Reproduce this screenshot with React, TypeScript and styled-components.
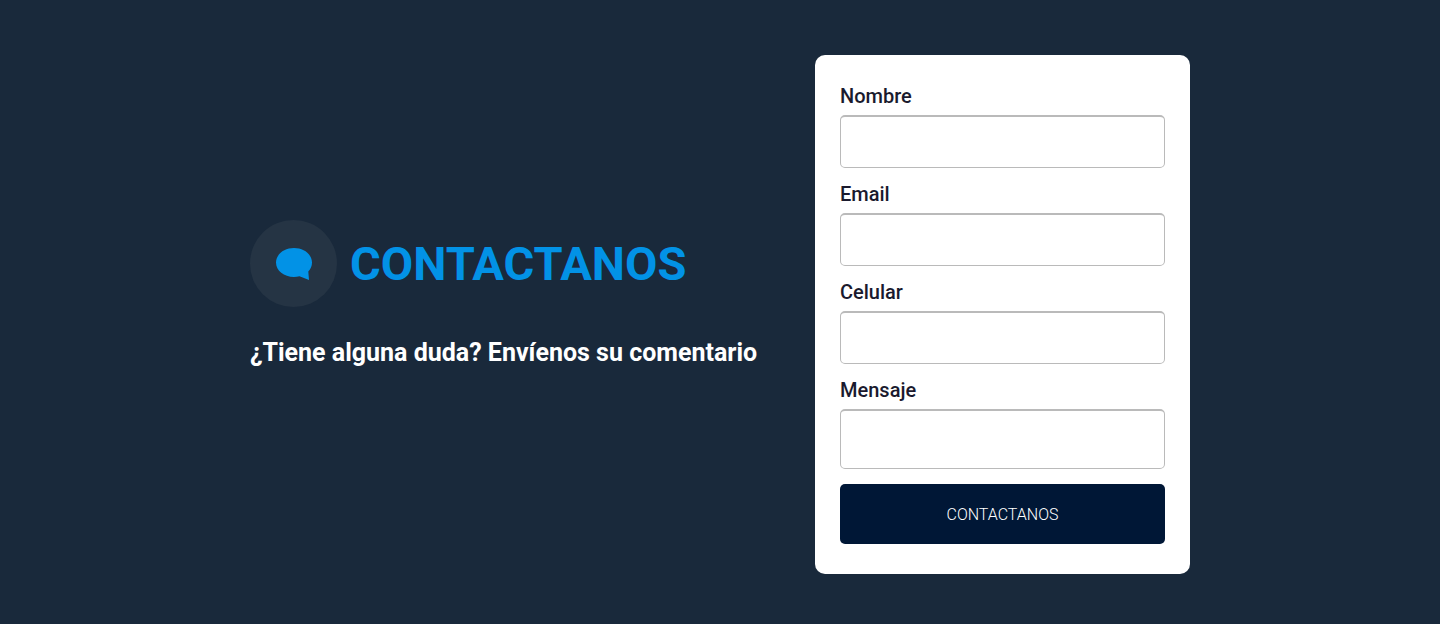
import React from "react";
import styled, { createGlobalStyle } from "styled-components";

const GlobalStyle = createGlobalStyle`
  *, *::before, *::after { box-sizing: border-box; }
  body {
    margin: 0;
    background: #ffffff;
    font-family: Roboto, "Liberation Sans", sans-serif;
  }
`;

const Section = styled.section`
  display: flex;
  justify-content: center;
  padding: 55px 20px 50px;
  background: #19293b;
`;

const Container = styled.div`
  display: flex;
  flex-wrap: wrap;
  align-items: center;
  justify-content: space-between;
  gap: 30px;
  width: 100%;
  max-width: 940px;
`;

const Intro = styled.div`
  padding-bottom: 40px;
`;

const Heading = styled.div`
  display: flex;
  align-items: center;
  gap: 13px;
`;

const IconCircle = styled.span`
  display: flex;
  align-items: center;
  justify-content: center;
  flex: none;
  width: 87px;
  height: 87px;
  border-radius: 50%;
  background: #253444;
`;

const Title = styled.h2`
  margin: 0;
  color: #0292e6;
  font-size: 47px;
  line-height: 60px;
  font-weight: 700;
`;

const Subtitle = styled.p`
  margin: 30px 0 0;
  color: #ffffff;
  font-size: 25px;
  line-height: 32px;
  font-weight: 700;
`;

const Form = styled.form`
  display: flex;
  flex-direction: column;
  gap: 15px;
  width: 375px;
  max-width: 100%;
  padding: 30px 25px;
  border-radius: 10px;
  background: #ffffff;
`;

const Field = styled.div`
  display: flex;
  flex-direction: column;
  gap: 7px;
`;

const Label = styled.label`
  color: #1a1a2e;
  font-size: 20px;
  line-height: 23px;
  font-weight: 500;
`;

const Input = styled.input`
  width: 100%;
  height: 53px;
  padding: 0 12px;
  border: 1px solid #bababa;
  border-top-width: 2px;
  border-radius: 5px;
  background: #ffffff;
  font: inherit;
`;

const TextArea = styled.textarea`
  display: block;
  width: 100%;
  height: 60px;
  padding: 12px;
  border: 1px solid #bababa;
  border-top-width: 2px;
  border-radius: 5px;
  background: #ffffff;
  font: inherit;
  resize: none;
`;

const Submit = styled.button`
  height: 60px;
  border: 0;
  border-radius: 5px;
  background: #001736;
  color: #ffffff;
  font-family: Roboto, "Liberation Sans", sans-serif;
  font-size: 16px;
  font-weight: 300;
  cursor: pointer;
`;

const FIELDS = [
  { id: "nombre", label: "Nombre", type: "text" },
  { id: "email", label: "Email", type: "email" },
  { id: "celular", label: "Celular", type: "tel" },
];

function ChatIcon() {
  return (
    <svg width="36" height="32" viewBox="0 0 36 32" aria-hidden="true">
      <path
        fill="#0292e6"
        d="M18 0C28 0 36 6.4 36 14.5c0 3.400-1.200 6.300-3.700 8.900L33 32l-9.500-3.700c-1.800.5-3.600.7-5.500.7C8 29 0 22.600 0 14.500S8 0 18 0Z"
      />
    </svg>
  );
}

export default function App() {
  return (
    <>
      <GlobalStyle />
      <Section>
        <Container>
          <Intro>
            <Heading>
              <IconCircle>
                <ChatIcon />
              </IconCircle>
              <Title>CONTACTANOS</Title>
            </Heading>
            <Subtitle>¿Tiene alguna duda? Envíenos su comentario</Subtitle>
          </Intro>
          <Form onSubmit={(event) => event.preventDefault()}>
            {FIELDS.map(({ id, label, type }) => (
              <Field key={id}>
                <Label htmlFor={id}>{label}</Label>
                <Input id={id} name={id} type={type} />
              </Field>
            ))}
            <Field>
              <Label htmlFor="mensaje">Mensaje</Label>
              <TextArea id="mensaje" name="mensaje" />
            </Field>
            <Submit type="submit">CONTACTANOS</Submit>
          </Form>
        </Container>
      </Section>
    </>
  );
}
